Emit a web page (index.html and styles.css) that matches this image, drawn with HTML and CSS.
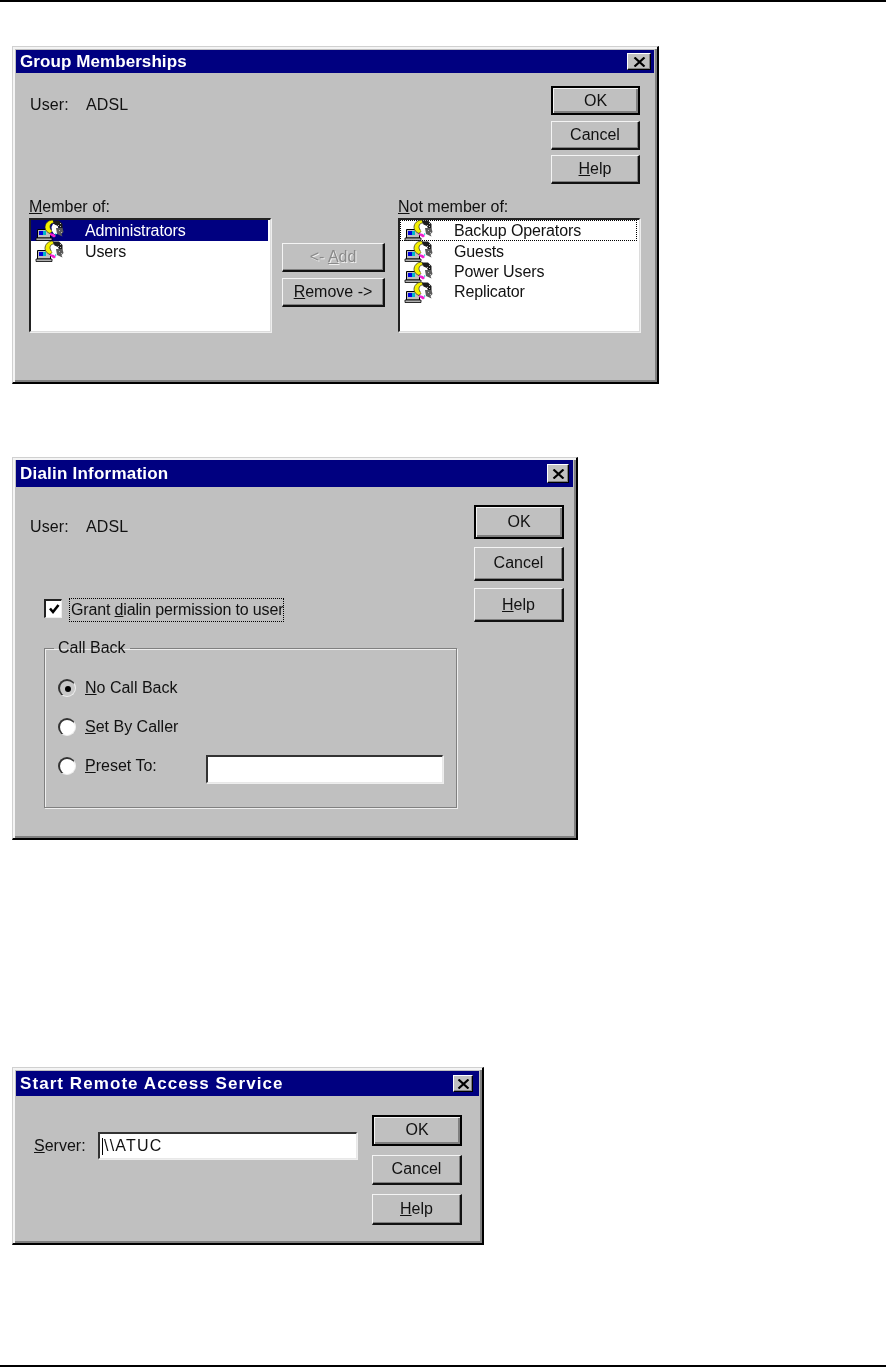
FILE: index.html
```html
<!DOCTYPE html>
<html lang="en">
<head>
<meta charset="utf-8">
<title>Dialogs</title>
<link rel="stylesheet" href="styles.css">
</head>
<body>
<svg class="defs" width="0" height="0" aria-hidden="true">
  <defs>
    <symbol id="group" viewBox="0 0 30 22">
      <path d="M3.500 9.500h13v8.500h-13z" fill="#c0c0c0" stroke="#000"/>
      <path d="M5 11h4v4H5z" fill="#0000e0"/>
      <path d="M9 11h3v4H9z" fill="#00b8c8"/>
      <path d="M2 18h16v2.500H2z" fill="#b0b0b0" stroke="#000" stroke-width=".8"/>
      <path d="M19 0C14 0 11 3.500 11 7.500c0 3 2.500 5 5 6l2.500-2.500C17 10 16 8.500 16 6.500c0-2.500 2-3.500 4-3.500z" fill="#f4f000" stroke="#222" stroke-width=".7"/>
      <path d="M19 4h4l1 3 1 4-1 3-4 0-2-3-.5-4z" fill="#fff"/>
      <path d="M19 .5h6l3.500 3.500v4.500h-3.500l-1-2.500-3.500-1.500z" fill="#1c1c1c"/>
      <path d="M22 8h6.500l1 4-2 2 1 2.500-5.500-2.500z" fill="#5a5a5a"/>
      <path d="M26 3h1v1h-1zM24 5h1v1h-1zM26 6h1v1h-1zM25 10h1v1h-1zM27 12h1v1h-1z" fill="#bbb"/>
      <path d="M16 13l4 1 2 2-2 1.500-4-2.500z" fill="#f020d0"/>
      <path d="M21 13l1.500 1-1 1.500z" fill="#00c8c8"/>
    </symbol>
    <symbol id="close" viewBox="0 0 13 10">
      <path d="M1.500 .5l10 9M11.500 .5l-10 9" fill="none" stroke="#000" stroke-width="2.200"/>
    </symbol>
  </defs>
</svg>

<div class="rule"></div>

<section class="dialog dialog-group">
  <header class="titlebar titlebar-group">
    <h2 class="title">Group Memberships</h2>
    <span class="close close-group"><svg class="close-x"><use href="#close"/></svg></span>
  </header>
  <div class="group-top">
    <p class="user user-group"><span class="user-key">User:</span><span>ADSL</span></p>
    <div class="actions actions-group">
      <button class="btn btn-default">OK</button>
      <button class="btn">Cancel</button>
      <button class="btn"><u>H</u>elp</button>
    </div>
  </div>
  <div class="group-lists">
    <div class="list-col">
      <div class="list-label"><u>M</u>ember of:</div>
      <ul class="list">
        <li class="row row-selected"><svg class="group-icon"><use href="#group"/></svg>Administrators</li>
        <li class="row"><svg class="group-icon"><use href="#group"/></svg>Users</li>
      </ul>
    </div>
    <div class="transfer">
      <button class="btn btn-disabled">&lt;- <u>A</u>dd</button>
      <button class="btn"><u>R</u>emove -&gt;</button>
    </div>
    <div class="list-col">
      <div class="list-label"><u>N</u>ot member of:</div>
      <ul class="list">
        <li class="row row-focus"><svg class="group-icon"><use href="#group"/></svg>Backup Operators</li>
        <li class="row"><svg class="group-icon"><use href="#group"/></svg>Guests</li>
        <li class="row"><svg class="group-icon"><use href="#group"/></svg>Power Users</li>
        <li class="row"><svg class="group-icon"><use href="#group"/></svg>Replicator</li>
      </ul>
    </div>
  </div>
</section>

<section class="dialog dialog-dialin">
  <header class="titlebar titlebar-dialin">
    <h2 class="title">Dialin Information</h2>
    <span class="close close-dialin"><svg class="close-x"><use href="#close"/></svg></span>
  </header>
  <div class="dialin-body">
    <div class="dialin-main">
      <p class="user user-dialin"><span class="user-key">User:</span><span>ADSL</span></p>
      <div class="check-row">
        <span class="checkbox">
          <svg class="check-mark" viewBox="0 0 12 12"><path d="M2 5.500l3 3.500 5.500-7" fill="none" stroke="#000" stroke-width="2.600"/></svg>
        </span>
        <span class="check-label">Grant <u>d</u>ialin permission to user</span>
      </div>
      <fieldset class="callback">
        <legend class="legend">Call Back</legend>
        <div class="radio-row"><span class="radio radio-on"></span><span><u>N</u>o Call Back</span></div>
        <div class="radio-row"><span class="radio"></span><span><u>S</u>et By Caller</span></div>
        <div class="radio-row">
          <span class="radio"></span><span class="preset-label"><u>P</u>reset To:</span>
          <span class="field field-preset"></span>
        </div>
      </fieldset>
    </div>
    <div class="actions actions-dialin">
      <button class="btn btn-default">OK</button>
      <button class="btn">Cancel</button>
      <button class="btn"><u>H</u>elp</button>
    </div>
  </div>
</section>

<section class="dialog dialog-start">
  <header class="titlebar titlebar-start">
    <h2 class="title">Start Remote Access Service</h2>
    <span class="close close-start"><svg class="close-x"><use href="#close"/></svg></span>
  </header>
  <div class="start-body">
    <div class="server-row">
      <span class="server-label"><u>S</u>erver:</span>
      <span class="field field-server"><span class="caret"></span>\\ATUC</span>
    </div>
    <div class="actions actions-start">
      <button class="btn btn-default">OK</button>
      <button class="btn">Cancel</button>
      <button class="btn"><u>H</u>elp</button>
    </div>
  </div>
</section>

<div class="rule rule-bottom"></div>
</body>
</html>
```
FILE: styles.css
```css
* { box-sizing: border-box; }
html, body { margin: 0; padding: 0; }
body {
  background: #fff;
  font-family: "Liberation Sans", Arial, sans-serif;
  font-size: 16px;
  color: #111;
  height: 1367px;
  overflow: hidden;
}
.defs { position: absolute; }
.rule { height: 2px; background: #000; }
.rule-bottom { margin-top: 120px; }

.dialog {
  margin-left: 12px;
  padding: 3px 3px 0 3px;
  background: #c0c0c0;
  border-style: solid;
  border-width: 1px 2px 2px 1px;
  border-color: #d0d0d0 #000 #000 #d0d0d0;
  box-shadow: inset 2px 2px 0 #f4f4f4, inset -2px -2px 0 #808080;
  filter: blur(.35px);
}
.dialog-group { width: 647px; height: 338px; margin-top: 44px; }
.dialog-dialin { width: 566px; height: 383px; margin-top: 73px; padding-top: 2px; }
.dialog-start { width: 472px; height: 178px; margin-top: 227px; }

.titlebar {
  display: flex;
  align-items: center;
  justify-content: space-between;
  background: #000080;
  color: #fff;
  padding-left: 4px;
}
.titlebar-group { height: 23px; padding-right: 3px; }
.titlebar-dialin { height: 27px; padding-right: 4px; }
.titlebar-start { height: 25px; padding-right: 6px; }
.title {
  margin: 0;
  font-size: 17px;
  font-weight: 700;
  letter-spacing: .08px;
  white-space: nowrap;
}
.titlebar-dialin .title { letter-spacing: .22px; }
.titlebar-start .title { letter-spacing: 1.070px; }

.close {
  display: flex;
  align-items: center;
  justify-content: center;
  background: #c0c0c0;
  border-style: solid;
  border-width: 1px;
  border-color: #fff #000 #000 #fff;
  box-shadow: inset -1px -1px 0 #808080;
}
.close-group { width: 24px; height: 17px; }
.close-dialin { width: 22px; height: 19px; }
.close-start { width: 20px; height: 17px; }
.close-x { width: 13px; height: 10px; }

.user { margin: 0; display: flex; letter-spacing: .1px; }
.user-key { width: 56px; }
.user-group { margin: 23px 0 0 14px; }
.user-dialin { margin: 31px 0 0 14px; }

.actions { display: flex; flex-direction: column; width: 90px; }
.actions-group { width: 89px; margin: 13px 14px 0 0; gap: 5.500px; }
.actions-group .btn { height: 29px; }
.actions-dialin { margin: 18px 9px 0 0; gap: 7.500px; }
.actions-dialin .btn { height: 34px; }
.actions-start { margin: 19px 17px 0 0; gap: 9px; }
.actions-start .btn { height: 30.500px; }

.btn {
  display: block;
  padding: 0;
  background: #c0c0c0;
  font: inherit;
  color: #111;
  border-style: solid;
  border-width: 1px 2px 2px 1px;
  border-color: #f4f4f4 #111 #111 #f4f4f4;
  box-shadow: inset -1px -1px 0 #808080;
}
.btn-default {
  border: 2px solid #000;
  box-shadow: inset 1px 1px 0 #f4f4f4, inset -2px -2px 0 #808080;
}
.btn-disabled {
  color: #8a8a8a;
  text-shadow: 1px 1px 0 #efefef;
}

.group-top {
  display: flex;
  justify-content: space-between;
  height: 125px;
}
.group-lists {
  display: grid;
  grid-template-columns: 242px 103px 244px;
  column-gap: 11px;
  padding-left: 13px;
}
.group-lists > :last-child { margin-left: 2px; }
.list-label {
  height: 20px;
  line-height: 17px;
}
.list {
  list-style: none;
  margin: 0;
  padding: 0 2px 0 0;
  height: 114px;
  background: #fff;
  border-style: solid;
  border-width: 2px 1px 1px 2px;
  border-color: #222 #dcdcdc #dcdcdc #222;
  box-shadow: 1px 1px 0 #eee;
}
.row {
  display: flex;
  align-items: center;
  height: 20px;
  padding-left: 54px;
  position: relative;
  letter-spacing: -.12px;
}
.row:first-child { height: 21px; }
.row:nth-child(2) { height: 21px; padding-top: 1px; }
.row-selected { background: #000080; color: #fff; }
.row-focus { outline: 1px dotted #000; outline-offset: -1px; }
.group-icon {
  position: absolute;
  left: 3px;
  top: 0;
  width: 30px;
  height: 22px;
}
.transfer {
  display: flex;
  flex-direction: column;
  gap: 6px;
  padding-top: 45px;
}
.transfer .btn { height: 29px; }

.dialin-body, .start-body {
  display: flex;
  justify-content: space-between;
}
.dialin-main { margin-left: 14px; flex: none; width: 429px; }
.dialin-main .user { margin-left: 0; }
.check-row {
  display: flex;
  align-items: center;
  margin: 62px 0 0 14px;
  height: 24px;
}
.checkbox {
  display: flex;
  align-items: center;
  justify-content: center;
  width: 18px;
  height: 19px;
  margin-bottom: 3px;
  background: #fff;
  border-style: solid;
  border-width: 2px 1px 1px 2px;
  border-color: #222 #eee #eee #222;
}
.check-mark { width: 12px; height: 12px; }
.check-label {
  display: flex;
  align-items: center;
  white-space: pre;
  margin-left: 7px;
  height: 24px;
  padding: 0 1px 0 2px;
  outline: 1px dotted #000;
  outline-offset: -1px;
  letter-spacing: -.15px;
}
.callback {
  margin: 18px 0 0 14px;
  padding: 0;
  width: 413px;
  height: 168px;
  border: 1px solid #808080;
  box-shadow: 1px 1px 0 #eee, inset 1px 1px 0 #eee;
  min-inline-size: 0;
}
.legend {
  margin-left: 9px;
  padding: 0 4px;
  line-height: 16px;
}
.radio-row {
  display: flex;
  align-items: center;
  height: 28px;
  margin: 0 0 11px 13px;
}
.radio-row:first-of-type { margin-top: 18px; }
.radio {
  display: flex;
  align-items: center;
  justify-content: center;
  flex: none;
  width: 18px;
  height: 18px;
  margin-right: 9px;
  border-radius: 50%;
  background: #fff;
  border-style: solid;
  border-width: 2px 1px 1px 2px;
  border-color: #333 #eee #eee #333;
}
.radio-on { background: #c8c8c8; }
.radio-on::after {
  content: "";
  width: 6px;
  height: 6px;
  border-radius: 50%;
  background: #000;
}
.preset-label { width: 121px; }

.field {
  display: flex;
  align-items: center;
  background: #fff;
  border-style: solid;
  border-width: 2px 1px 1px 2px;
  border-color: #333 #e8e8e8 #e8e8e8 #333;
  box-shadow: 1px 1px 0 #eee;
}
.field-preset { width: 237px; height: 28px; margin-top: 6px; }
.field-server {
  width: 259px;
  height: 27px;
  padding-left: 2px;
  letter-spacing: 1.200px;
}
.caret { width: 1px; height: 17px; background: #000; margin-right: 1px; }
.server-row {
  display: flex;
  align-items: center;
  margin: 36px 0 0 18px;
  align-self: flex-start;
}
.server-label { width: 64px; }
```
